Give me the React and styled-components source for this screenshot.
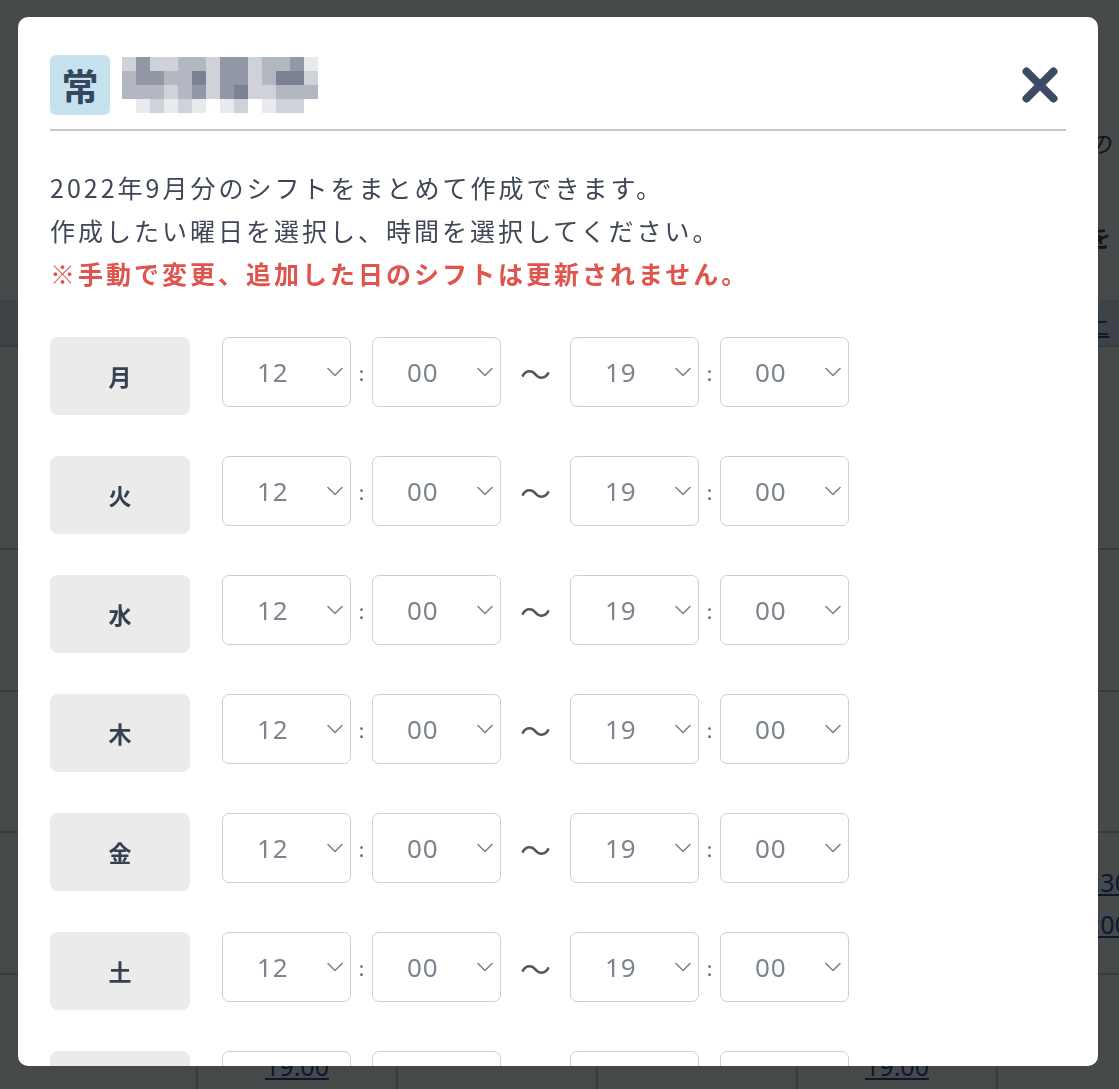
import React from 'react'
import styled, { createGlobalStyle } from 'styled-components'

const GlobalStyle = createGlobalStyle`
  html, body {
    margin: 0;
    padding: 0;
    height: 100%;
    overflow: hidden;
  }
  body {
    background: #fff;
    font-family: "Noto Sans", "Noto Sans CJK JP", sans-serif;
    color: #3f4756;
  }
  * { box-sizing: border-box; }
`

const DAYS = ['月', '火', '水', '木', '金', '土', '日']

// faint page that sits behind the modal overlay
const TABLE_ROWS = [
  { height: 203, cells: [[], ['12:00', '19:00'], [], ['12:00', '19:00'], [], []] },
  { height: 142, cells: [[], [], ['12:00', '19:00'], [], [], []] },
  { height: 141, cells: [[], ['12:00', '19:00'], [], [], ['12:00', '19:00'], []] },
  { height: 142, cells: [[], [], [], ['12:00', '19:00'], [], ['12:30', '19:00']] },
  { height: 142, cells: [[], ['12:00', '19:00'], [], [], ['12:00', '19:00'], []] },
]

const MOSAIC = [
  [1, 3, 1, 1, 2, 2, 1, 3, 3, 1, 2, 2, 3, 0],
  [2, 3, 3, 2, 2, 4, 1, 3, 3, 1, 2, 4, 4, 1],
  [2, 2, 2, 1, 2, 3, 1, 3, 4, 1, 1, 2, 2, 2],
  [-1, 0, 1, 0, 1, 0, -1, 0, 1, -1, 0, 1, 1, -1],
]
const MOSAIC_COLORS = ['#e8eaee', '#cfd2d9', '#b2b7c2', '#9398a6', '#7b8293']

const Page = styled.div`
  width: 1119px;
  padding-top: 125px;
  overflow: hidden;
`

const PageText = styled.p`
  margin: 0 0 ${p => p.$gap}px;
  padding-right: 8px;
  text-align: right;
  font-size: 24px;
  font-style: ${p => (p.$italic ? 'italic' : 'normal')};
  font-weight: ${p => (p.$bold ? 700 : 400)};
  color: #333;
  white-space: nowrap;
`

const Table = styled.div`
  display: grid;
  grid-template-columns: 198px repeat(6, 200px);
  width: 1400px;
`

const HeadCell = styled.div`
  height: 47px;
  display: flex;
  align-items: center;
  justify-content: center;
  background: #dfe7f2;
  border-right: 2px solid #c6c6c6;
  border-bottom: 2px solid #c6c6c6;
`

const BodyCell = styled.div`
  height: ${p => p.$height}px;
  display: flex;
  flex-direction: column;
  align-items: center;
  justify-content: center;
  gap: 8px;
  border-right: 2px solid #c6c6c6;
  border-bottom: 2px solid #c6c6c6;
`

const PageLink = styled.a`
  color: #1c3f8f;
  font-size: 25px;
  text-decoration: underline;
`

const Overlay = styled.div`
  position: fixed;
  inset: 0;
  display: flex;
  padding: 17px 21px 23px 18px;
  background: rgba(8, 12, 14, 0.75);
`

const Modal = styled.div`
  flex: 1;
  display: flex;
  flex-direction: column;
  background: #fff;
  border-radius: 10px;
  overflow: hidden;
`

const ModalBody = styled.div`
  flex: 1;
  overflow-y: auto;
  padding: 38px 32px 40px;
  scrollbar-width: none;
  &::-webkit-scrollbar { display: none; }
`

const Header = styled.div`
  display: flex;
  align-items: center;
  gap: 12px;
  padding-bottom: 14px;
  border-bottom: 2px solid #c9c9c9;
`

const Badge = styled.div`
  width: 60px;
  height: 60px;
  display: flex;
  align-items: center;
  justify-content: center;
  border-radius: 6px;
  background: #c7e2ef;
  color: #34475e;
  font-family: "Noto Sans CJK JP", sans-serif;
  font-size: 37px;
  font-weight: 700;
  line-height: 1;
`

const CloseButton = styled.button`
  margin-left: auto;
  margin-right: 8px;
  width: 36px;
  height: 36px;
  padding: 0;
  border: 0;
  background: none;
  cursor: pointer;
`

const Notice = styled.div`
  margin-top: 35px;
  margin-bottom: 42px;
  font-family: "Noto Sans CJK JP", sans-serif;
  font-size: 25px;
  line-height: 43px;
  letter-spacing: 3px;
  color: #3f4756;
`

const Warning = styled.div`
  color: #e0544e;
  font-weight: 700;
`

const DayList = styled.div`
  display: flex;
  flex-direction: column;
  gap: 41px;
`

const DayRow = styled.div`
  display: flex;
  align-items: flex-start;
`

const DayButton = styled.button`
  width: 140px;
  height: 78px;
  margin-right: 32px;
  border: 0;
  border-radius: 8px;
  background: #ebebeb;
  color: #36404f;
  font-family: "Noto Sans CJK JP", sans-serif;
  font-size: 23px;
  font-weight: 700;
  cursor: pointer;
`

const SelectWrap = styled.div`
  position: relative;
  width: 129px;
  height: 70px;
`

const Select = styled.select`
  appearance: none;
  width: 100%;
  height: 100%;
  padding: 0 0 0 34px;
  border: 1.5px solid #cfcfcf;
  border-radius: 7px;
  background: #fff;
  color: #7d8490;
  font-family: "Noto Sans", "Noto Sans CJK JP", sans-serif;
  font-size: 26px;
  letter-spacing: 1px;
  outline: none;
`

const Chevron = styled.svg`
  position: absolute;
  right: 8px;
  top: 50%;
  margin-top: -5px;
  pointer-events: none;
`

const Separator = styled.span`
  width: ${p => p.$width}px;
  height: 70px;
  display: flex;
  align-items: center;
  justify-content: center;
  color: ${p => p.$color};
  font-family: "Noto Sans CJK JP", sans-serif;
  font-size: ${p => p.$size}px;
`

const Mosaic = () => (
  <svg width="196" height="56" viewBox="0 0 196 56" shapeRendering="crispEdges">
    {MOSAIC.map((row, r) =>
      row.map((v, c) =>
        v < 0 ? null : (
          <rect key={`${r}-${c}`} x={c * 14} y={r * 14} width="14" height="14" fill={MOSAIC_COLORS[v]} />
        )
      )
    )}
  </svg>
)

const TimeSelect = ({ value, options }) => (
  <SelectWrap>
    <Select defaultValue={value}>
      {options.map(o => (
        <option key={o} value={o}>{o}</option>
      ))}
    </Select>
    <Chevron width="16" height="10" viewBox="0 0 16 10">
      <path d="M1 1.5 L8 8.5 L15 1.5" fill="none" stroke="#7d8490" strokeWidth="1.6" strokeLinecap="round" strokeLinejoin="round" />
    </Chevron>
  </SelectWrap>
)

const HOURS = Array.from({ length: 24 }, (_, i) => String(i).padStart(2, '0'))
const MINUTES = ['00', '15', '30', '45']

const BackgroundPage = () => (
  <Page>
    <PageText $italic $gap={59}>シフトの</PageText>
    <PageText $bold $gap={46}>曜日を</PageText>
    <Table>
      {DAYS.map(d => (
        <HeadCell key={d}><PageLink>{d}</PageLink></HeadCell>
      ))}
      {TABLE_ROWS.map((row, r) =>
        [...row.cells, []].map((cell, c) => (
          <BodyCell key={`${r}-${c}`} $height={row.height}>
            {cell.map(t => (
              <PageLink key={t}>{t}</PageLink>
            ))}
          </BodyCell>
        ))
      )}
    </Table>
  </Page>
)

export default function App() {
  return (
    <>
      <GlobalStyle />
      <BackgroundPage />
      <Overlay>
        <Modal>
          <ModalBody>
            <Header>
              <Badge>常</Badge>
              <Mosaic />
              <CloseButton aria-label="閉じる">
                <svg width="36" height="36" viewBox="0 0 36 36">
                  <path d="M4.5 4.5 L31.5 31.5 M31.5 4.5 L4.5 31.5" stroke="#3d4b63" strokeWidth="8" strokeLinecap="round" />
                </svg>
              </CloseButton>
            </Header>
            <Notice>
              <div>2022年9月分のシフトをまとめて作成できます。</div>
              <div>作成したい曜日を選択し、時間を選択してください。</div>
              <Warning>※手動で変更、追加した日のシフトは更新されません。</Warning>
            </Notice>
            <DayList>
              {DAYS.map(day => (
                <DayRow key={day}>
                  <DayButton>{day}</DayButton>
                  <TimeSelect value="12" options={HOURS} />
                  <Separator $width={21} $size={20} $color="#666">:</Separator>
                  <TimeSelect value="00" options={MINUTES} />
                  <Separator $width={69} $size={31} $color="#555">〜</Separator>
                  <TimeSelect value="19" options={HOURS} />
                  <Separator $width={21} $size={20} $color="#666">:</Separator>
                  <TimeSelect value="00" options={MINUTES} />
                </DayRow>
              ))}
            </DayList>
          </ModalBody>
        </Modal>
      </Overlay>
    </>
  )
}
